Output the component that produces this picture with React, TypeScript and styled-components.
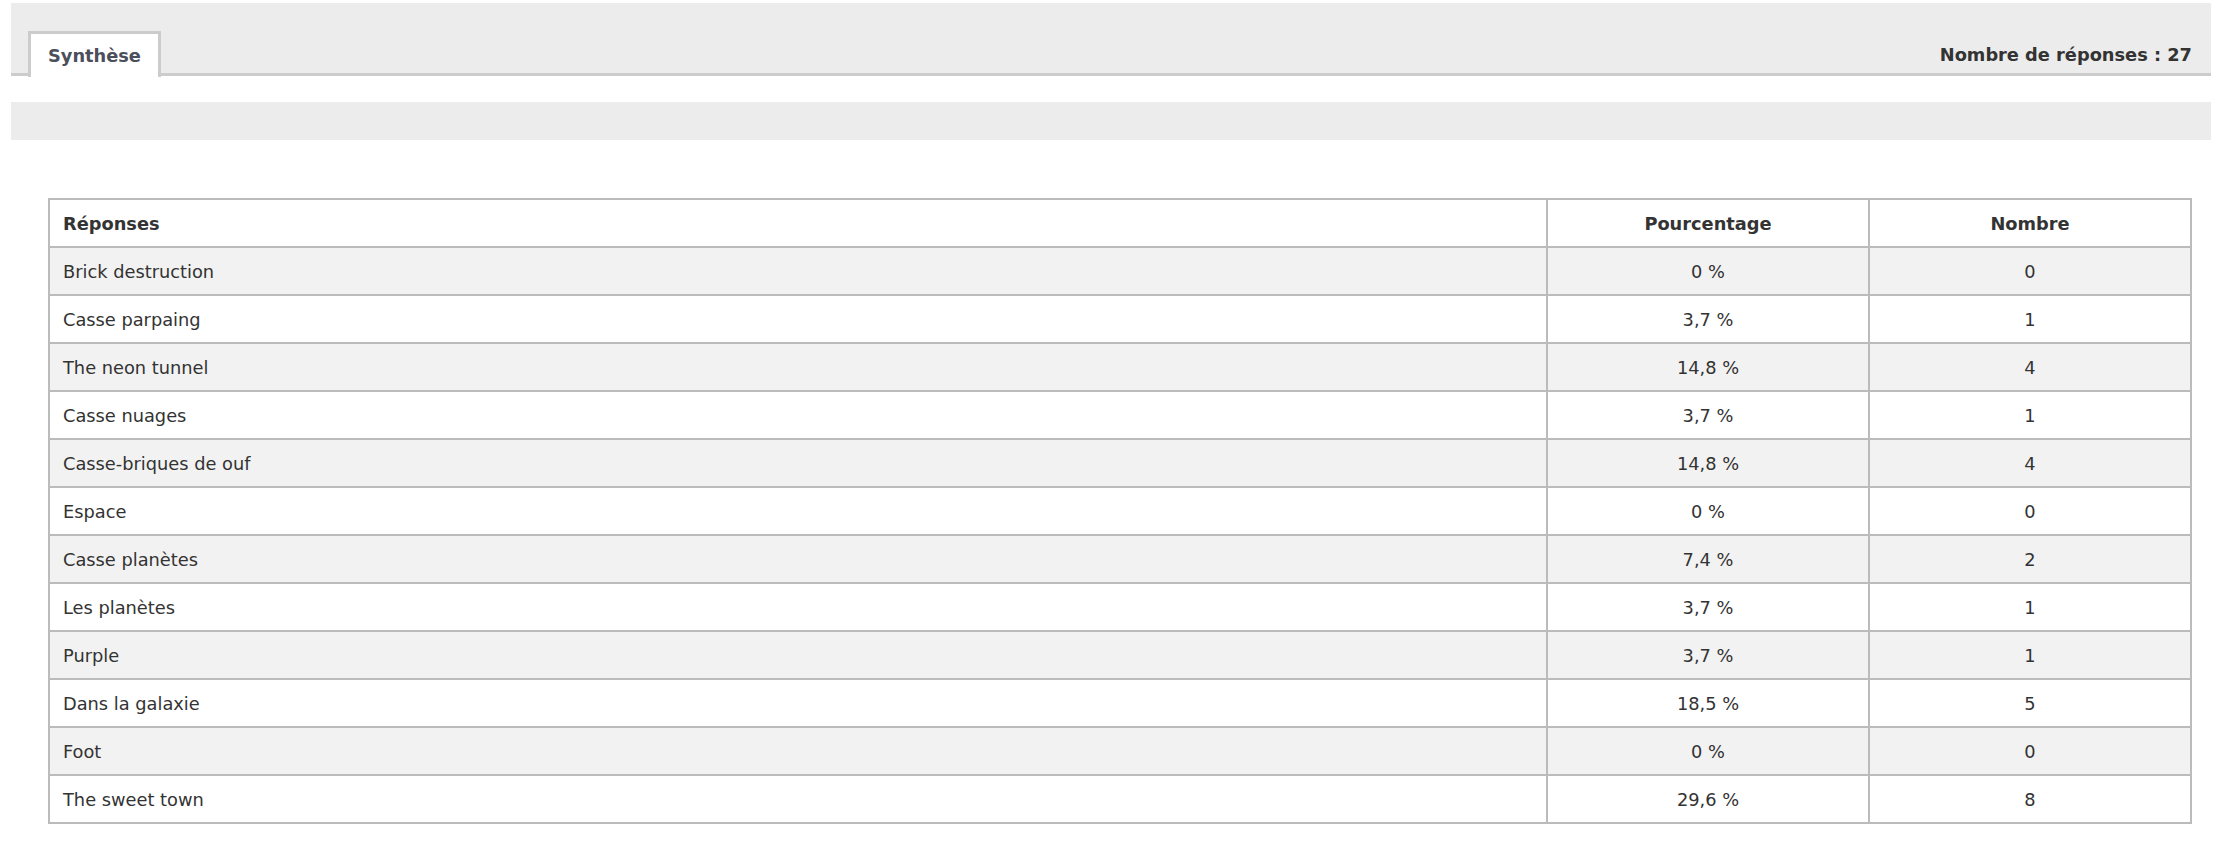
import React from "react";
import styled, { createGlobalStyle } from "styled-components";

const Global = createGlobalStyle`
  html, body { margin: 0; padding: 0; background: #fff; }
  body { font-family: "DejaVu Sans", Verdana, sans-serif; color: #333; }
`;

const Page = styled.div`
  padding: 3px 7px 26px 11px;
`;

const TabBar = styled.div`
  display: flex;
  align-items: flex-end;
  justify-content: space-between;
  height: 70px;
  background: #ececec;
  border-bottom: 3px solid #ccc;
  padding: 0 19px 0 17px;
`;

const Tab = styled.div`
  box-sizing: border-box;
  height: 46px;
  margin-bottom: -4px;
  padding: 11px 17px 0 17px;
  background: #fff;
  border: 3px solid #ccc;
  border-bottom: none;
  font-size: 17.8px;
  line-height: 21px;
  font-weight: bold;
  color: #4b4f5b;
`;

const Count = styled.div`
  font-size: 17.8px;
  line-height: 21px;
  font-weight: bold;
  color: #333;
  margin-bottom: 8px;
`;

const FilterBar = styled.div`
  margin-top: 26px;
  height: 38px;
  background: #ececec;
`;

const Table = styled.table`
  margin: 58px 21px 0 37px;
  width: calc(100% - 58px);
  border-collapse: collapse;
  table-layout: fixed;
  border: 2px solid #bbb;
  font-size: 17.8px;
  color: #333;
`;

const Row = styled.tr<{ $alt?: boolean }>`
  background: ${(p) => (p.$alt ? "#f2f2f2" : "#fff")};
`;

const Cell = styled.td<{ $center?: boolean }>`
  height: 46px;
  padding: 0 13px;
  border: 2px solid #bbb;
  text-align: ${(p) => (p.$center ? "center" : "left")};
  vertical-align: middle;
  white-space: nowrap;
`;

const Head = styled.th<{ $center?: boolean }>`
  height: 46px;
  padding: 0 13px;
  border: 2px solid #bbb;
  font-weight: bold;
  text-align: ${(p) => (p.$center ? "center" : "left")};
  vertical-align: middle;
`;

const rows: [string, string, number][] = [
  ["Brick destruction", "0 %", 0],
  ["Casse parpaing", "3,7 %", 1],
  ["The neon tunnel", "14,8 %", 4],
  ["Casse nuages", "3,7 %", 1],
  ["Casse-briques de ouf", "14,8 %", 4],
  ["Espace", "0 %", 0],
  ["Casse planètes", "7,4 %", 2],
  ["Les planètes", "3,7 %", 1],
  ["Purple", "3,7 %", 1],
  ["Dans la galaxie", "18,5 %", 5],
  ["Foot", "0 %", 0],
  ["The sweet town", "29,6 %", 8],
];

export default function App() {
  return (
    <Page>
      <Global />
      <TabBar>
        <Tab>Synthèse</Tab>
        <Count>Nombre de réponses : 27</Count>
      </TabBar>
      <FilterBar />
      <Table>
        <colgroup>
          <col style={{ width: 1498 }} />
          <col style={{ width: 322 }} />
          <col style={{ width: 322 }} />
        </colgroup>
        <thead>
          <Row>
            <Head>Réponses</Head>
            <Head $center>Pourcentage</Head>
            <Head $center>Nombre</Head>
          </Row>
        </thead>
        <tbody>
          {rows.map(([label, pct, n], i) => (
            <Row key={label} $alt={i % 2 === 0}>
              <Cell>{label}</Cell>
              <Cell $center>{pct}</Cell>
              <Cell $center>{n}</Cell>
            </Row>
          ))}
        </tbody>
      </Table>
    </Page>
  );
}
